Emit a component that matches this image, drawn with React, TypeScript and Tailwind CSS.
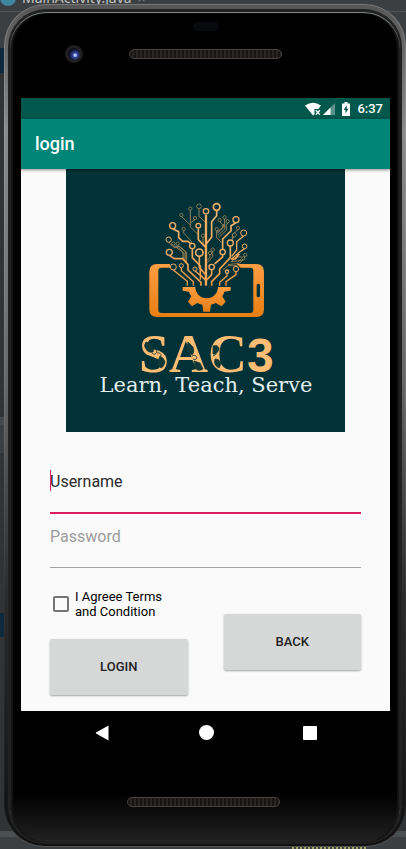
import React from "react";

type Node = [x: number, y: number, r: number, w: number];

const nodes: Node[] = [
  [452, 114, 10, 5], [420, 127, 8, 4], [399, 112, 7, 2], [373, 119, 5, 2],
  [346, 138, 5, 2], [387, 147, 5, 2], [320, 170, 9, 4], [353, 180, 5, 2],
  [397, 170, 7, 4], [411, 200, 5, 2], [308, 212, 8, 3], [322, 224, 5, 2],
  [335, 224, 5, 2], [379, 231, 8, 4], [310, 250, 9, 4], [400, 251, 11, 5],
  [432, 252, 5, 2], [440, 242, 5, 2], [437, 294, 8, 4], [470, 249, 8, 4],
  [493, 222, 9, 4], [510, 152, 9, 4], [533, 192, 9, 3], [516, 177, 5, 2],
  [536, 232, 7, 3], [505, 198, 6, 2], [461, 153, 5, 2], [476, 145, 5, 2],
  [485, 157, 5, 2], [452, 180, 5, 2], [538, 258, 5, 2], [532, 268, 5, 2],
  [510, 300, 8, 3], [483, 308, 5, 4], [322, 294, 9, 3], [346, 290, 6, 3],
  [387, 300, 6, 3],
];

const thick = [
  "M452 125V140L437 158V204L420 226",
  "M397 179V212L420 236",
  "M400 262V295L420 319",
  "M379 240V266L403 291V318L420 335",
  "M320 179L338 188V206L350 217H366L375 225",
  "M310 259L325 269H350L366 287V303L405 340V350",
  "M510 161L495 170V186L470 210V240",
  "M470 258V264L446 285",
  "M437 303V317L422 333",
  "M493 231V266L461 300V314L437 338V350",
  "M495 270H508L520 254",
];

const medium = [
  "M322 303L364 337V350",
  "M346 296V305L382 338V350",
  "M387 306L403 319V332",
  "M483 313V321L461 340V350",
  "M510 308V317L480 338V350",
  "M533 201L512 218V243L497 262",
  "M536 239L520 250L497 270",
];

const thin = [
  "M399 119V142L418 160",
  "M373 124V174L397 197",
  "M346 142L373 168",
  "M387 152L374 161",
  "M353 185V192L376 217V224",
  "M411 205V228",
  "M308 220L324 235H336L351 250V267",
  "M322 229L332 236L354 253V273",
  "M335 229L358 248V277",
  "M329 232H341L362 250V280",
  "M461 158L469 166V178L454 193",
  "M476 150V180L456 199",
  "M485 162L481 168V184L458 206",
  "M452 185V206L466 220",
  "M473 165L473 174L452 190",
  "M516 182L499 198V213",
  "M505 204L498 209",
  "M440 247V263L424 281",
  "M432 257V265L424 274",
  "M538 263L526 275L494 278",
  "M532 272L520 283L486 287",
  "M526 263L510 265L496 278",
  "M525 270L516 278",
  "M514 290H486L470 303",
];

function Logo() {
  return (
    <svg
      viewBox="0 0 279 263"
      role="img"
      aria-label="SAC3 Learn, Teach, Serve"
      className="block w-[279px] bg-[#003237]"
    >
      <defs>
        <linearGradient id="copper" x1="0" y1="0" x2="0" y2="1">
          <stop offset="0" stopColor="#ff9d42" />
          <stop offset="1" stopColor="#e67e12" />
        </linearGradient>
        <linearGradient id="branch" gradientUnits="userSpaceOnUse" x1="0" y1="100" x2="0" y2="350">
          <stop offset="0" stopColor="#f4bd80" />
          <stop offset="1" stopColor="#f79a45" />
        </linearGradient>
      </defs>
      <g transform="scale(.3333)">
        <path
          fill="url(#copper)"
          fillRule="evenodd"
          d="M273 285H312V296H286Q277 296 277 305V423Q277 432 286 432H553Q562 432 562 423V305Q562 296 553 296H524L512 285H571Q594 285 594 308V421Q594 444 571 444H273Q250 444 250 421V308Q250 285 273 285ZM577 344Q572 344 572 349V380Q572 385 577 385Q582 385 582 380V349Q582 344 577 344Z"
        />
        <path
          fill="url(#copper)"
          d="M350 354H388A34 34 0 0 0 456 354H494V365L475 368Q473 376 469 382L479 398L467 412L449 402Q442 406 435 407L432 428H412L409 407Q401 406 394 402L378 412L366 398L376 382Q371 376 369 368L350 365Z"
        />
        <g fill="none" stroke="url(#branch)" strokeLinejoin="round">
          <path d="M420 350V138" stroke="#f7a95e" strokeWidth="7" />
          <g strokeWidth="5">
            {thick.map((d) => <path key={d} d={d} />)}
          </g>
          <g strokeWidth="4">
            {medium.map((d) => <path key={d} d={d} />)}
          </g>
          <g strokeWidth="2.4" opacity=".75">
            {thin.map((d) => <path key={d} d={d} />)}
          </g>
        </g>
        {nodes.map(([x, y, r, w]) => (
          <circle key={`${x}-${y}`} cx={x} cy={y} r={r} fill="#003237" stroke="#f3ae6a" strokeWidth={w} opacity={w > 2 ? 1 : 0.8} />
        ))}
      </g>
      <text x="73" y="203" fill="#ffbd73" className="font-['Liberation_Serif',serif] text-[54px] font-bold">
        SAC<tspan className="font-['Liberation_Sans',sans-serif] text-[48px]">3</tspan>
      </text>
      <g fill="#12393a" stroke="#12393a" strokeWidth=".8">
        <path d="M80 173q4 0 5 4q4 2 2 6q-5 1-7-3q-3-3 0-7ZM94 187q4 2 5 6q-1 5-4 6q-4-3-3-7ZM122 173l5 5q2 5-1 8l-5-5ZM128 192l6 2l3 6q-5 3-8-1ZM147 177q5-2 6 3q-2 6-6 5ZM149 190q5 0 6 5l-2 4q-6-3-4-9Z" />
        <path fill="none" d="M85 181q5-3 6 2q-2 4-5 1M91 184q4-1 4 3M126 187q4-2 5 2q-2 3-4 1M147 187q4-1 3-5" />
      </g>
      <text x="140" y="223" textAnchor="middle" fill="#e4eeee" className="font-['DejaVu_Serif',serif] text-[21px]">
        Learn, Teach, Serve
      </text>
    </svg>
  );
}

function StatusBar() {
  return (
    <div className="flex h-[21px] items-center justify-end bg-[#00574b] pr-[7px] text-white">
      <svg viewBox="0 0 30 14" className="mr-[7px] h-3.5 w-[30px]">
        <path fill="white" d="M0 3.5Q8-2 16 3.5L13.3 7H9.5V12.2L8 13.5Z" />
        <path stroke="white" strokeWidth="1.4" d="M10.8 8.2l4 4.4M14.8 8.2l-4 4.4" />
        <path fill="#5a918a" d="M30 1V13H18Z" />
        <path fill="white" d="M25.5 5.5V13H18Z" />
      </svg>
      <svg viewBox="0 0 8 14" className="mr-[7px] h-3.5 w-2">
        <path fill="white" d="M2.5 0h3v1.5H8V14H0V1.5h2.5Z" />
        <path fill="#00574b" d="M4.8 3.2L1.7 8h1.8v3.4L6.4 6.7H4.8Z" />
      </svg>
      <span className="text-[13px] leading-5 font-medium">6:37</span>
    </div>
  );
}

function Speaker() {
  return (
    <div className="h-[10px] w-[153px] rounded-full border border-[#464240] bg-[repeating-linear-gradient(90deg,#171513_0_2px,#2a2623_2px_4px)]" />
  );
}

const buttonStyle =
  "h-14 w-full rounded-xs bg-[#d6d7d7] text-[13px] font-medium text-[#212121] shadow-[0_1px_2px_rgba(0,0,0,0.35)]";

const fieldStyle =
  "block w-full bg-transparent pt-[11px] pb-[18px] text-base leading-6 outline-none";

function LoginForm() {
  return (
    <form className="px-[29px] pt-[27px] pb-4" onSubmit={(e) => e.preventDefault()}>
      <div className="relative">
        <input
          type="text"
          aria-label="Username"
          defaultValue="Username"
          className={`border-b-2 border-[#dc1c60] text-[#2b2b2b] ${fieldStyle}`}
        />
        <span className="absolute top-[11px] left-0 h-[21px] w-px bg-[#e91e63]" />
      </div>
      <input
        type="password"
        aria-label="Password"
        placeholder="Password"
        className={`border-b border-[#a3a3a3] placeholder:text-[#9c9c9c] ${fieldStyle}`}
      />
      <div className="grid grid-cols-2 items-start gap-9 pt-[21px]">
        <div>
          <label className="flex items-center gap-1.5 pl-[3px] text-[13px] leading-[15px] text-black">
            <input
              type="checkbox"
              className="size-4 shrink-0 appearance-none rounded-xs border-2 border-[#757575] checked:bg-[#d81b60]"
            />
            <span>
              I Agreee Terms
              <br />
              and Condition
            </span>
          </label>
          <button type="submit" className={`mt-5 ${buttonStyle}`}>LOGIN</button>
        </div>
        <button type="button" className={`mt-[25px] ${buttonStyle}`}>BACK</button>
      </div>
    </form>
  );
}

function NavigationBar() {
  return (
    <nav className="flex h-[43px] items-center justify-center gap-[89px] bg-black">
      <button type="button" aria-label="Back">
        <svg viewBox="0 0 15 16" className="block h-4 w-[15px]" fill="white">
          <path d="M13.5 .5V15.5L1 8.5Q.5 8 1 7.5Z" />
        </svg>
      </button>
      <button type="button" aria-label="Home" className="size-[15px] rounded-full bg-white" />
      <button type="button" aria-label="Overview" className="size-3.5 rounded-[1px] bg-white" />
    </nav>
  );
}

function EditorBackdrop() {
  return (
    <div className="absolute inset-0 flex flex-col overflow-hidden bg-[#313335]">
      <div className="h-3 border-b border-[#515355] bg-[#3c3f41]">
        <div className="-mt-[10px] flex h-4 items-center gap-1.5 text-sm leading-4 text-[#c4c4c4]">
          <span className="size-4 rounded-full bg-[#3e86a0]" />
          <span className="font-['Noto_Sans',sans-serif]">MainActivity.java</span>
          <span className="text-[#777777]">×</span>
        </div>
      </div>
      <div className="h-9 bg-[#3c3f41]" />
      <div className="h-[25px] bg-[#0d293e]" />
      <div className="h-[344px]" />
      <div className="h-9 border-t-8 border-[#45494b] bg-[#3c3f41]" />
      <div className="h-40" />
      <div className="h-6 bg-[#0d293e]" />
      <div className="grow" />
      <div className="flex h-[18px] items-end justify-end border-t-[6px] border-[#4b5153] bg-[#3c3f41] pr-10">
        <div className="w-[74px] border-b-2 border-dotted border-[#a5a568]" />
      </div>
    </div>
  );
}

export default function App() {
  return (
    <div className="relative min-h-screen overflow-hidden pt-1 pb-0.5 pl-1 font-[Roboto,sans-serif]">
      <EditorBackdrop />
      <main className="relative rounded-t-[42px] rounded-b-[40px] bg-[linear-gradient(180deg,#777_0%,#999_15%,#777_45%,#333_70%,#1b1b1b_95%,#555_100%)] p-px">
        <div className="rounded-t-[41px] rounded-b-[39px] bg-[linear-gradient(180deg,#555_0%,#8a8a8a_15%,#666_45%,#2c2c2c_70%,#111_100%)] px-[3px] pt-1 pb-0.5">
          <div className="rounded-t-[38px] rounded-b-[37px] bg-[#222] px-0.5 pt-[3px] pb-px">
            <div className="rounded-t-[36px] rounded-b-[36px] bg-[linear-gradient(180deg,#000_0%,#000_94%,#222_100%)] pr-[10px] pl-[11px] shadow-[inset_0_1px_1px_#8b9292,inset_3px_0_1px_#151515,inset_-3px_0_1px_#151515]">
              <div className="flex h-[86px] flex-col items-center pt-2.5">
                <div className="h-[9px] w-[26px] rounded-full bg-[#08090d]" />
                <div className="mt-3.5 grid w-full grid-cols-[1fr_153px_1fr] items-center">
                  <div className="flex h-[18px] items-center pl-11">
                    <div className="flex size-[18px] items-center justify-center rounded-full bg-[#211f21]">
                      <div className="size-3 rounded-full bg-[radial-gradient(circle_at_60%_60%,#b4c4ff_0_10%,#3a4ba4_22%,#11152e_55%,#05060d_80%)]" />
                    </div>
                  </div>
                  <Speaker />
                </div>
              </div>
              <div className="overflow-hidden bg-[#fafafa]">
                <StatusBar />
                <header className="relative flex h-[50px] items-center bg-[#008577] px-3.5 shadow-[0_1px_3px_rgba(0,0,0,0.45)]">
                  <h1 className="text-lg leading-6 font-medium text-white">login</h1>
                </header>
                <div className="flex justify-center">
                  <Logo />
                </div>
                <LoginForm />
              </div>
              <NavigationBar />
              <div className="flex h-[89px] justify-center pt-[43px] pr-1">
                <Speaker />
              </div>
            </div>
          </div>
        </div>
      </main>
    </div>
  );
}
